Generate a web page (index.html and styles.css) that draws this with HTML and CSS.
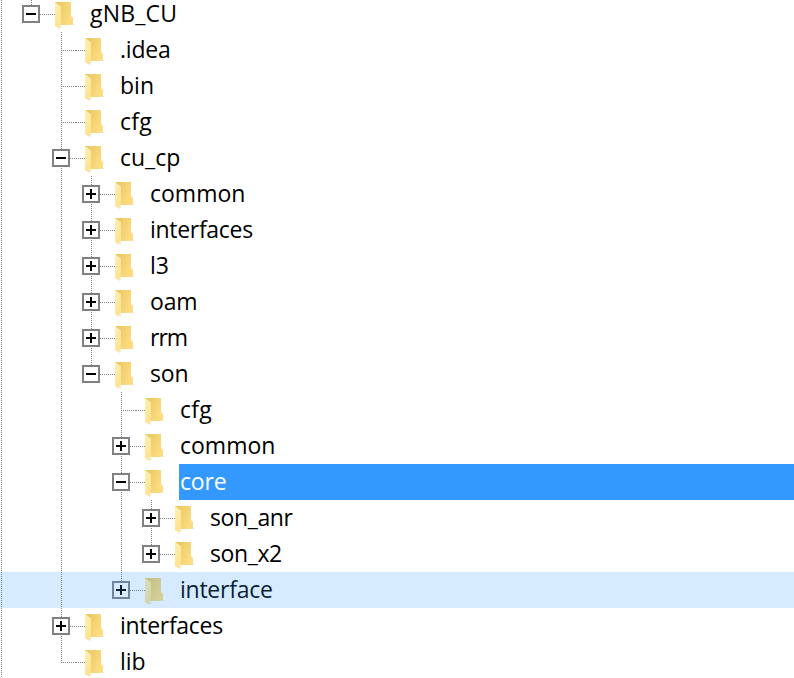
FILE: index.html
```
<!DOCTYPE html>
<html lang="en">
<head>
<meta charset="utf-8">
<title>Folders</title>
<link rel="stylesheet" href="styles.css">
</head>
<body>
<svg width="0" height="0" class="defs" aria-hidden="true">
  <defs>
    <linearGradient id="back" x1="0.2" y1="0" x2="1" y2="0.4"><stop offset="0" stop-color="#eac862"/><stop offset="1" stop-color="#fddc80"/></linearGradient>
    <linearGradient id="flap" x1="0" y1="0" x2="0.3" y2="1"><stop offset="0" stop-color="#fff0b8"/><stop offset="1" stop-color="#ffe28f"/></linearGradient>
  </defs>
  <symbol id="folder" viewBox="0 0 20 28">
    <path d="M4 24h3l-2 3z" fill="#eee8df"/>
    <path d="M0 0h16v14l2 2v7H0z" fill="url(#back)"/>
    <path d="M16 22h3v1h-3z" fill="#f5e3c2"/>
    <path d="M0 0l6 4.500v17.500l-1.500 2v3L0 24z" fill="url(#flap)"/>
  </symbol>
</svg>
<ul class="tree" id="tree"></ul>
<script src="tree.js"></script>
</body>
</html>
```
FILE: styles.css
```
body {
  margin: 0;
  background: #fff;
  color: #000;
  font: 23px/26px "Open Sans", "Noto Sans", sans-serif;
  overflow: hidden;
}

.defs {
  display: block;
}

.tree {
  list-style: none;
  margin: -4px 0 0;
  padding: 0;
}

.row {
  display: flex;
  height: 36px;
}

.root,
.guide {
  flex: none;
  width: 30px;
  background: no-repeat 15px 0 / 1px 100%;
}

.root {
  width: 16px;
  background-position: 1px 0;
}

.line {
  background-image: repeating-linear-gradient(#808080 0 1px, transparent 1px 2px);
}

.end {
  background-size: 1px 18px;
}

.start {
  display: flex;
  align-items: center;
  padding-left: 15px;
  box-sizing: border-box;
}

.branch {
  flex: 1;
  height: 1px;
  background: repeating-linear-gradient(90deg, #808080 0 1px, transparent 1px 2px);
}

.box {
  flex: none;
  box-sizing: border-box;
  width: 18px;
  height: 18px;
  margin-left: -9px;
  border: 2px solid #808080;
  background:
    linear-gradient(#000, #000) center / 10px 2px no-repeat,
    #fff;
}

.plus {
  background:
    linear-gradient(#000, #000) center / 10px 2px no-repeat,
    linear-gradient(#000, #000) center / 2px 10px no-repeat,
    #fff;
}

.stub {
  flex: none;
  align-self: center;
  width: 9px;
  height: 1px;
  background: repeating-linear-gradient(90deg, #808080 0 1px, transparent 1px 2px);
}

.icon {
  flex: none;
  width: 20px;
  height: 28px;
  margin: 6px 14px 0 0;
}

.label {
  flex: 1;
  padding: 4px 0 0 1px;
  white-space: nowrap;
}

.selected .label {
  background: #3399ff;
  color: #fff;
}

.hover {
  position: relative;
}

.hover::after {
  content: "";
  position: absolute;
  inset: 0;
  background: rgba(51, 153, 255, 0.2);
}
```
FILE: tree.js
```
// depth, name, toggle ("+", "-" or none), guides of the ancestors ("|" drawn, " " blank), state, tracking in px
const rows = [
  [0, "gNB_CU", "-", "", "", 0.2],
  [1, ".idea", "", " ", "", -0.2],
  [1, "bin", "", " ", "", 0],
  [1, "cfg", "", " ", "", 0.3],
  [1, "cu_cp", "-", " ", "", 0],
  [2, "common", "+", " |", "", 0],
  [2, "interfaces", "+", " |", "", -0.3],
  [2, "l3", "+", " |", "", 0],
  [2, "oam", "+", " |", "", -0.2],
  [2, "rrm", "+", " |", "", -1],
  [2, "son", "-", " |", "last", -0.2],
  [3, "cfg", "", " | ", "", 0.3],
  [3, "common", "+", " | ", "", 0],
  [3, "core", "-", " | ", "selected", -0.2],
  [4, "son_anr", "+", " | |", "", -0.4],
  [4, "son_x2", "+", " | |", "last", -0.4],
  [3, "interface", "+", " | ", "hover last", -0.25],
  [1, "interfaces", "+", " ", "", -0.3],
  [1, "lib", "", " ", "last", 0],
];

document.getElementById("tree").innerHTML = rows.map(([, name, toggle, guides, state, tracking]) => {
  const ancestors = [...guides].map(g => `<span class="guide${g === "|" ? " line" : ""}"></span>`).join("");
  const end = state.includes("last") || name === "gNB_CU" ? " end" : "";
  const box = toggle ? `<span class="box${toggle === "+" ? " plus" : ""}"></span>` : "";
  return `<li class="row ${state}"><span class="root line"></span>${ancestors}` +
    `<span class="guide line start${end}">${box}<span class="branch"></span></span><span class="stub"></span>` +
    `<svg class="icon"><use href="#folder"/></svg><span class="label" style="letter-spacing:${tracking}px">${name}</span></li>`;
}).join("");
```
